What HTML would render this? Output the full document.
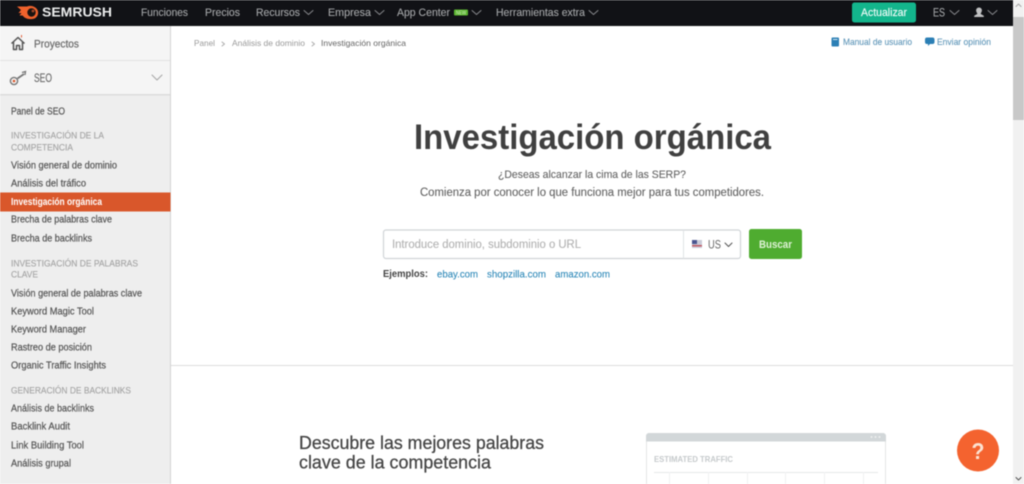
<!DOCTYPE html>
<html lang="es"><head><meta charset="utf-8"><title>Investigación orgánica</title>
<style>
html,body{margin:0;padding:0;width:1024px;height:484px;overflow:hidden;background:#fff}
svg{display:block;filter:blur(.5px)}
text{font-family:"Liberation Sans",sans-serif}
.n{fill:#a4a6a8;stroke:#a4a6a8;stroke-width:.12;font-size:11px}
.s{fill:#555;stroke:#555;stroke-width:.2;font-size:10px}
.h{fill:#a3a3a3;stroke:#a3a3a3;stroke-width:.12;font-size:9.5px}
.b{fill:#999;font-size:8.5px}
.l{fill:#2d88b8;stroke:#2d88b8;stroke-width:.1;font-size:10.5px}
.c{fill:none;stroke-width:1;stroke-linecap:round;stroke-linejoin:round}
</style></head><body>
<svg width="1024" height="484" viewBox="0 0 1024 484" xmlns="http://www.w3.org/2000/svg">
<rect width="1024" height="484" fill="#fff"/>
<!-- sidebar -->
<rect x="0" y="26" width="170" height="458" fill="#eeeeee"/>
<rect x="0" y="26" width="170" height="34" fill="#f5f5f5"/>
<rect x="0" y="60" width="170" height="1" fill="#e2e2e2"/>
<rect x="0" y="61" width="170" height="33" fill="#f5f5f5"/>
<rect x="0" y="94" width="170" height="1.5" fill="#dcdcdc"/>
<rect x="170" y="26" width="1" height="458" fill="#d4d4d4"/>
<path d="M11.5 43.5 18 37.5 24.5 43.5M13.5 42V49.5H16.5V45.5H19.500V49.5H22.5V42" fill="none" stroke="#555" stroke-width="1.5" stroke-linejoin="round"/>
<path d="M21.5 35v2.5" stroke="#e0603a" stroke-width="1"/>
<text x="34" y="47.5" textLength="45" lengthAdjust="spacingAndGlyphs" style="font-size:11px;fill:#6a6a6a;stroke:#6a6a6a;stroke-width:.2">Proyectos</text>
<circle cx="14" cy="81" r="3.6" fill="none" stroke="#777" stroke-width="1.4"/><circle cx="14" cy="81" r="1.3" fill="#d9572b"/>
<path d="M17.5 78.5 24 74" stroke="#777" stroke-width="1.8"/><path d="M22 72.500 25.500 71.500 25 75" stroke="#777" stroke-width="1.300" fill="none"/>
<text x="34" y="82" textLength="18" lengthAdjust="spacingAndGlyphs" style="font-size:11.500px;fill:#6a6a6a;stroke:#6a6a6a;stroke-width:.15">SEO</text>
<path class="c" d="M152 75 157 80 162 75" stroke="#a5a5a5" stroke-width="1.400"/>
<text class="s" x="11" y="114.500" textLength="54" lengthAdjust="spacingAndGlyphs">Panel de SEO</text>
<text class="h" x="11" y="138.500" textLength="93" lengthAdjust="spacingAndGlyphs">INVESTIGACIÓN DE LA</text>
<text class="h" x="11" y="150.500" textLength="62" lengthAdjust="spacingAndGlyphs">COMPETENCIA</text>
<text class="s" x="11" y="168.500" textLength="106" lengthAdjust="spacingAndGlyphs">Visión general de dominio</text>
<text class="s" x="11" y="186.500" textLength="75" lengthAdjust="spacingAndGlyphs">Análisis del tráfico</text>
<rect x="0" y="192.500" width="170.500" height="19" fill="#d9572b"/>
<text x="11" y="205" textLength="91" lengthAdjust="spacingAndGlyphs" style="font-size:10px;font-weight:bold;fill:#fff">Investigación orgánica</text>
<text class="s" x="11" y="222.500" textLength="101" lengthAdjust="spacingAndGlyphs">Brecha de palabras clave</text>
<text class="s" x="11" y="241.500" textLength="81" lengthAdjust="spacingAndGlyphs">Brecha de backlinks</text>
<text class="h" x="11" y="266.500" textLength="127" lengthAdjust="spacingAndGlyphs">INVESTIGACIÓN DE PALABRAS</text>
<text class="h" x="11" y="277.500" textLength="27" lengthAdjust="spacingAndGlyphs">CLAVE</text>
<text class="s" x="11" y="296.500" textLength="131" lengthAdjust="spacingAndGlyphs">Visión general de palabras clave</text>
<text class="s" x="11" y="314.500" textLength="83" lengthAdjust="spacingAndGlyphs">Keyword Magic Tool</text>
<text class="s" x="11" y="332.500" textLength="75" lengthAdjust="spacingAndGlyphs">Keyword Manager</text>
<text class="s" x="11" y="350.500" textLength="81" lengthAdjust="spacingAndGlyphs">Rastreo de posición</text>
<text class="s" x="11" y="368.500" textLength="95" lengthAdjust="spacingAndGlyphs">Organic Traffic Insights</text>
<text class="h" x="11" y="393.500" textLength="120" lengthAdjust="spacingAndGlyphs">GENERACIÓN DE BACKLINKS</text>
<text class="s" x="11" y="411.500" textLength="83" lengthAdjust="spacingAndGlyphs">Análisis de backlinks</text>
<text class="s" x="11" y="429.500" textLength="59" lengthAdjust="spacingAndGlyphs">Backlink Audit</text>
<text class="s" x="11" y="448.500" textLength="73" lengthAdjust="spacingAndGlyphs">Link Building Tool</text>
<text class="s" x="11" y="466.500" textLength="60" lengthAdjust="spacingAndGlyphs">Análisis grupal</text>
<!-- top nav -->
<rect width="1024" height="26" fill="#111216"/>
<path d="M17 6.500H27C31 5 35.500 6.500 37.500 10 39 13.500 37.500 17 34.500 18.500 31 19.800 27 19 24.500 17.500L22.500 15.500H19.500L21.500 13H18.500L21 10Z" fill="#f0622c"/>
<circle cx="31.500" cy="12.500" r="4.200" fill="#1a1412"/><circle cx="33" cy="11" r="1.400" fill="#a8492a"/>
<text x="42" y="16.500" textLength="70" lengthAdjust="spacingAndGlyphs" style="font-size:12.500px;font-weight:bold;fill:#eceded">SEMRUSH</text>
<text class="n" x="141" y="16" textLength="47" lengthAdjust="spacingAndGlyphs">Funciones</text>
<text class="n" x="205" y="16" textLength="35" lengthAdjust="spacingAndGlyphs">Precios</text>
<text class="n" x="256" y="16" textLength="44" lengthAdjust="spacingAndGlyphs">Recursos</text>
<path class="c" stroke="#85878a" d="M304 10.500 308.500 14.500 313 10.500"/>
<text class="n" x="328" y="16" textLength="43" lengthAdjust="spacingAndGlyphs">Empresa</text>
<path class="c" stroke="#85878a" d="M375 10.500 379.500 14.500 384 10.500"/>
<text class="n" x="397" y="16" textLength="53" lengthAdjust="spacingAndGlyphs">App Center</text>
<rect x="454" y="9.500" width="14" height="6" rx="1" fill="#5cb531"/>
<text x="456" y="14.300" textLength="10" lengthAdjust="spacingAndGlyphs" style="font-size:5px;fill:#cfeabf">NEW</text>
<path class="c" stroke="#85878a" d="M472 10.500 476.500 14.500 481 10.500"/>
<text class="n" x="496" y="16" textLength="89" lengthAdjust="spacingAndGlyphs">Herramientas extra</text>
<path class="c" stroke="#85878a" d="M589 10.500 593.500 14.500 598 10.500"/>
<rect x="852" y="2.500" width="64" height="20" rx="2.500" fill="#13b58c"/>
<text x="861" y="16" textLength="46" lengthAdjust="spacingAndGlyphs" style="font-size:11px;fill:#f0fbf8;stroke:#f0fbf8;stroke-width:.15">Actualizar</text>
<text class="n" x="933" y="16.500" textLength="12" lengthAdjust="spacingAndGlyphs" style="font-size:12px">ES</text>
<path class="c" stroke="#85878a" d="M950 10.500 954.500 14.500 959 10.500"/>
<path d="M979 7.500a2.900 2.900 0 0 1 2.600 4.200c-.3.800-.8 1.600-1 2.200l3.200 1.800v1.300h-9.600v-1.300l3.200-1.800c-.2-.6-.7-1.400-1-2.200a2.900 2.900 0 0 1 2.600-4.200z" fill="#c0c1c2"/>
<path class="c" stroke="#85878a" d="M988 10.500 992.500 14.500 997 10.500"/>
<!-- breadcrumb -->
<text class="b" x="194" y="46" textLength="21" lengthAdjust="spacingAndGlyphs">Panel</text>
<path class="c" stroke="#aaa" d="M222 42 224.500 44 222 46"/>
<text class="b" x="232" y="46" textLength="73" lengthAdjust="spacingAndGlyphs">Análisis de dominio</text>
<path class="c" stroke="#aaa" d="M312 42 314.500 44 312 46"/>
<text x="321" y="46" textLength="85" lengthAdjust="spacingAndGlyphs" style="font-size:8.500px;fill:#666">Investigación orgánica</text>
<rect x="831.500" y="37.500" width="7.500" height="9" rx="1" fill="#2b7fb5"/><rect x="833" y="39" width="4.500" height="1" fill="#cfe3ef"/>
<text x="843" y="45" textLength="69" lengthAdjust="spacingAndGlyphs" style="font-size:9.500px;fill:#5d95b8;stroke:#5d95b8;stroke-width:.1">Manual de usuario</text>
<path d="M927 37.500h5.500a2 2 0 0 1 2 2v2.500a2 2 0 0 1-2 2h-2.500l-2 2v-2h-1a2 2 0 0 1-2-2v-2.500a2 2 0 0 1 2-2z" fill="#2b7fb5"/>
<text x="937" y="45" textLength="54" lengthAdjust="spacingAndGlyphs" style="font-size:9.500px;fill:#5d95b8;stroke:#5d95b8;stroke-width:.1">Enviar opinión</text>
<!-- hero -->
<text x="414" y="149" textLength="357" lengthAdjust="spacingAndGlyphs" style="font-size:35px;font-weight:bold;fill:#404040">Investigación orgánica</text>
<text x="498" y="178" textLength="188" lengthAdjust="spacingAndGlyphs" style="font-size:11px;fill:#636363;stroke:#636363;stroke-width:.1">¿Deseas alcanzar la cima de las SERP?</text>
<text x="420" y="196" textLength="344" lengthAdjust="spacingAndGlyphs" style="font-size:11.500px;fill:#636363;stroke:#636363;stroke-width:.1">Comienza por conocer lo que funciona mejor para tus competidores.</text>
<rect x="383.500" y="230" width="357" height="28.500" rx="2.500" fill="#fff" stroke="#d0d4d7" stroke-width="1.200"/>
<rect x="683" y="230" width="1" height="28.500" fill="#e0e3e5"/>
<text x="392" y="248" textLength="189" lengthAdjust="spacingAndGlyphs" style="font-size:11.500px;fill:#b2b2b2;stroke:#b2b2b2;stroke-width:.12">Introduce dominio, subdominio o URL</text>
<rect x="692" y="240" width="10" height="8" fill="#c9cbd8"/><rect x="692" y="240" width="5" height="4" fill="#4a5590"/><rect x="692" y="245" width="10" height="1.500" fill="#c25a63"/>
<text x="708" y="248.500" textLength="13" lengthAdjust="spacingAndGlyphs" style="font-size:12px;fill:#666">US</text>
<path class="c" stroke="#555" stroke-width="1.700" d="M725 243 728.500 246.500 732 243"/>
<rect x="749" y="229" width="53" height="30" rx="2.500" fill="#4fac30"/>
<text x="759" y="248" textLength="33" lengthAdjust="spacingAndGlyphs" style="font-size:11px;font-weight:bold;fill:#dff2d6">Buscar</text>
<text x="383" y="277" textLength="45" lengthAdjust="spacingAndGlyphs" style="font-size:10px;font-weight:bold;fill:#444">Ejemplos:</text>
<text class="l" x="437" y="277.500" textLength="41" lengthAdjust="spacingAndGlyphs">ebay.com</text>
<text class="l" x="487" y="277.500" textLength="59" lengthAdjust="spacingAndGlyphs">shopzilla.com</text>
<text class="l" x="555" y="277.500" textLength="55" lengthAdjust="spacingAndGlyphs">amazon.com</text>
<rect x="171" y="365" width="842" height="1" fill="#dcdcdc"/>
<!-- lower -->
<text x="299" y="449" textLength="245" lengthAdjust="spacingAndGlyphs" style="font-size:18px;fill:#444;stroke:#444;stroke-width:.25">Descubre las mejores palabras</text>
<text x="299" y="468.500" textLength="192" lengthAdjust="spacingAndGlyphs" style="font-size:18px;fill:#444;stroke:#444;stroke-width:.25">clave de la competencia</text>
<rect x="646.500" y="433.500" width="239" height="60" rx="3" fill="#fff" stroke="#e3e5e6"/>
<path d="M646 441.500V436a3 3 0 0 1 3-3h234a3 3 0 0 1 3 3v5.500z" fill="#d2d7d9"/>
<circle cx="871.500" cy="437" r=".9" fill="#f4f4f4"/><circle cx="875.500" cy="437" r=".9" fill="#f4f4f4"/><circle cx="879.500" cy="437" r=".9" fill="#f4f4f4"/>
<text x="654" y="462" textLength="79" lengthAdjust="spacingAndGlyphs" style="font-size:8.500px;font-weight:bold;fill:#c6cacc">ESTIMATED TRAFFIC</text>
<rect x="654" y="472" width="224" height="1" fill="#e6e8e9"/>
<path d="M669.500 472V484M708.500 472V484M747.500 472V484M785.500 472V484M824.500 472V484M863.500 472V484" stroke="#f0f1f2"/>
<circle cx="978" cy="450.500" r="21" fill="#f4632f"/>
<text x="971.500" y="459" textLength="13" lengthAdjust="spacingAndGlyphs" style="font-size:23px;font-weight:bold;fill:#fbe2d2">?</text>
<!-- scrollbar -->
<rect x="1013" y="0" width="11" height="484" fill="#f1f1f1"/>
<rect x="1013" y="17" width="11" height="103" fill="#c8c8c8"/>
<path class="c" stroke="#a5a5a5" d="M1016 6.500 1018.500 4 1021 6.500"/>
<path class="c" stroke="#555" stroke-width="1.300" d="M1016 477.500 1018.500 480 1021 477.500"/>
</svg>
</body></html>
